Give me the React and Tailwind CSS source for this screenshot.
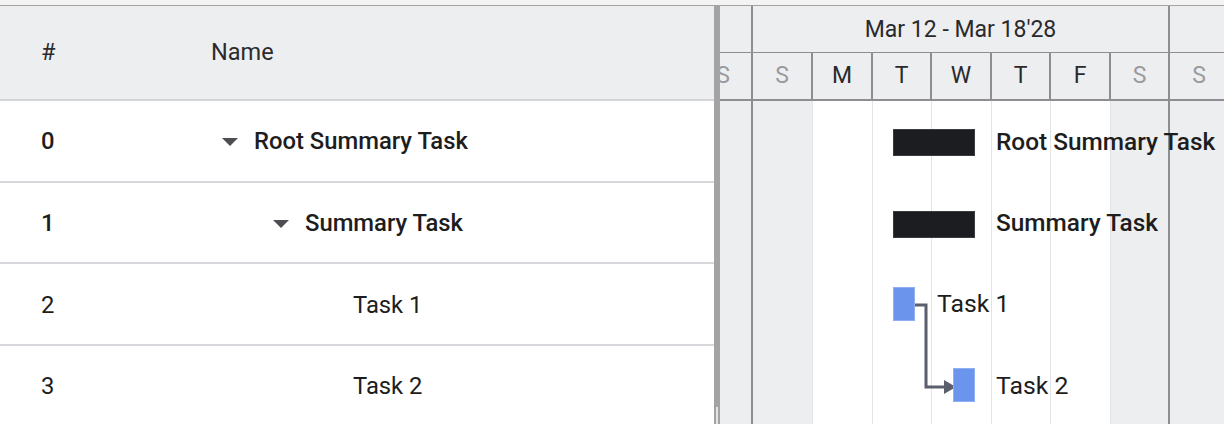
import React from "react";

const rows = [
  { id: 0, name: "Root Summary Task", level: 0, summary: true },
  { id: 1, name: "Summary Task", level: 1, summary: true },
  { id: 2, name: "Task 1", level: 2, summary: false },
  { id: 3, name: "Task 2", level: 2, summary: false },
];

// visible day columns of the timeline (first one is cut by the scroll)
const days = [
  { l: "S", w: "w-[33px]", weekend: true, weekEnd: true },
  { l: "S", w: "w-[60px]", weekend: true },
  { l: "M", w: "w-[60px]" },
  { l: "T", w: "w-[59px]" },
  { l: "W", w: "w-[60px]" },
  { l: "T", w: "w-[59px]" },
  { l: "F", w: "w-[60px]" },
  { l: "S", w: "w-[59px]", weekend: true, weekEnd: true },
  { l: "S", w: "w-[60px]", weekend: true },
];

const Caret = () => (
  <svg width="16" height="8" viewBox="0 0 16 8" className="shrink-0">
    <path d="M0 0 L16 0 L8 8 Z" fill="#4d4d52" />
  </svg>
);

const GridRow = ({ row }) => (
  <div className="h-[81.6px] shrink-0 flex items-center pt-[3px] border-b-2 border-[#d6d8dc] text-[23.8px] text-[#1d1d20]">
    <div className={`w-[195px] pl-[41px] ${row.summary ? "font-medium" : ""}`}>{row.id}</div>
    <div className="flex items-center pl-[16px]">
      <div style={{ width: row.level * 51 }} className="shrink-0" />
      <div className={`${row.summary ? "w-[43px]" : "w-[40px]"} shrink-0 pl-[11px] flex items-center`}>
        {row.summary && <Caret />}
      </div>
      <span className={row.summary ? "font-medium" : ""}>{row.name}</span>
    </div>
  </div>
);

export default function App() {
  return (
    <div className="w-[1224px] h-[424px] overflow-hidden bg-white flex flex-col font-['Roboto',sans-serif]">
      {/* top strip */}
      <div className="h-[6px] shrink-0 bg-[#f4f4f5] border-b border-[#a3a3a6]" />

      <div className="flex flex-1 min-h-0">
        {/* left grid */}
        <div className="w-[714px] shrink-0 flex flex-col">
          <div className="h-[95px] shrink-0 bg-[#edeef0] border-b-2 border-[#d3d5d9] flex items-center text-[23.5px] text-[#2b2b2e]">
            <div className="w-[195px] pl-[41px]">#</div>
            <div className="pl-[16px]">Name</div>
          </div>
          {rows.map((r) => (
            <GridRow key={r.id} row={r} />
          ))}
        </div>

        {/* splitter */}
        <div className="w-[6px] shrink-0 bg-[#a3a3a3] flex flex-col justify-end">
          <div className="ml-[2px] w-[2px] h-[17px] bg-[#e4e4e4]" />
        </div>

        {/* gantt */}
        <div className="flex-1 min-w-0 overflow-hidden flex flex-col">
          <div className="h-[95px] shrink-0 bg-[#edeef0] flex flex-col text-[23px] text-[#2a2a2d]">
            <div className="h-[47px] shrink-0 flex border-b border-[#8e8e92]">
              <div className="w-[33px] shrink-0 border-r-2 border-[#8e8e92]" />
              <div className="w-[417px] shrink-0 border-r-2 border-[#8e8e92] flex items-center justify-center pt-[2px]">
                Mar 12 - Mar 18'28
              </div>
              <div className="flex-1" />
            </div>
            <div className="h-[48px] shrink-0 flex border-b-2 border-[#8e8e92]">
              {days.map((d, i) => (
                <div
                  key={i}
                  className={`${d.w} shrink-0 overflow-hidden border-r-2 border-[#8e8e92] flex items-center ${i === 0 ? "justify-start" : "justify-center"} ${d.weekend ? "text-[#9a9a9e]" : ""}`}
                >
                  {i === 0 ? (
                    <span className="-ml-[27px] w-[60px] shrink-0 text-center">{d.l}</span>
                  ) : (
                    <span>{d.l}</span>
                  )}
                </div>
              ))}
            </div>
          </div>

          <div className="relative flex-1 flex">
            {days.map((d, i) => (
              <div
                key={i}
                className={`${d.w} shrink-0 ${d.weekend ? "bg-[#edeef0]" : "bg-white"} ${d.weekEnd ? "border-r-2 border-[#8e8e92]" : "border-r border-[#e2e3e6]"}`}
              />
            ))}

            {/* bars */}
            <div className="absolute left-[173px] top-[28px] w-[82px] h-[27px] bg-[#1c1d20] border border-[#3a3b40]" />
            <div className="absolute left-[276px] top-[41px] -translate-y-1/2 text-[24.4px] font-medium text-[#1d1d20] whitespace-nowrap">
              Root Summary Task
            </div>
            <div className="absolute left-[173px] top-[110px] w-[82px] h-[27px] bg-[#1c1d20] border border-[#3a3b40]" />
            <div className="absolute left-[276px] top-[122px] -translate-y-1/2 text-[24.4px] font-medium text-[#1d1d20] whitespace-nowrap">
              Summary Task
            </div>

            <svg className="absolute left-0 top-0" width="300" height="320">
              <path d="M195 204 H206 V286 H226" fill="none" stroke="#5a5e6d" strokeWidth="3" />
              <path d="M224 279 L236 286 L224 293 Z" fill="#5a5e6d" />
            </svg>

            <div className="absolute left-[173px] top-[186px] w-[22px] h-[34px] bg-[#6b95ec] border border-[#8fb0f2]" />
            <div className="absolute left-[217px] top-[203px] -translate-y-1/2 text-[24.8px] text-[#1d1d20] whitespace-nowrap">
              Task 1
            </div>
            <div className="absolute left-[233px] top-[267px] w-[22px] h-[34px] bg-[#6b95ec] border border-[#8fb0f2]" />
            <div className="absolute left-[276px] top-[285px] -translate-y-1/2 text-[24.8px] text-[#1d1d20] whitespace-nowrap">
              Task 2
            </div>
          </div>
        </div>
      </div>
    </div>
  );
}
